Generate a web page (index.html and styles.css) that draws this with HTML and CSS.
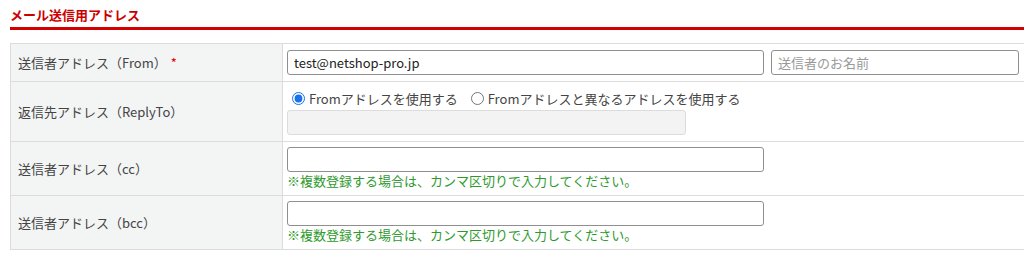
FILE: index.html
```html
<!DOCTYPE html>
<html lang="ja">
<head>
<meta charset="utf-8">
<link rel="stylesheet" href="styles.css">
</head>
<body>
<div class="section">
  <h2 class="section-title">メール送信用アドレス</h2>
  <table class="form-table">
    <tr class="row-from">
      <th>送信者アドレス（From）<span class="req">*</span></th>
      <td>
        <div class="inline">
          <input class="text wide" type="text" value="test@netshop-pro.jp">
          <input class="text name" type="text" placeholder="送信者のお名前">
        </div>
      </td>
    </tr>
    <tr class="row-reply">
      <th>返信先アドレス（ReplyTo）</th>
      <td>
        <div class="radios">
          <label class="radio"><input type="radio" name="reply" checked>Fromアドレスを使用する</label>
          <label class="radio"><input type="radio" name="reply">Fromアドレスと異なるアドレスを使用する</label>
        </div>
        <input class="text disabled" type="text" disabled>
      </td>
    </tr>
    <tr class="row-multi">
      <th>送信者アドレス（cc）</th>
      <td>
        <input class="text wide" type="text">
        <div class="note">※複数登録する場合は、カンマ区切りで入力してください。</div>
      </td>
    </tr>
    <tr class="row-multi">
      <th>送信者アドレス（bcc）</th>
      <td>
        <input class="text wide" type="text">
        <div class="note">※複数登録する場合は、カンマ区切りで入力してください。</div>
      </td>
    </tr>
  </table>
</div>
</body>
</html>
```

FILE: styles.css
```css
html, body {
  margin: 0;
  padding: 0;
  overflow: hidden;
  background: #fff;
}
body {
  font-family: "Noto Sans CJK JP", "Noto Sans", sans-serif;
  font-size: 13px;
  color: #444;
}
.section {
  padding: 0 0 0 10px;
  width: 1024px;
}
.section-title {
  margin: 0;
  padding-top: 5px;
  height: 22px;
  font-size: 13px;
  line-height: 20px;
  font-weight: bold;
  color: #cc0000;
  border-bottom: 3px solid #d40000;
}
.form-table {
  margin-top: 13px;
  border-collapse: collapse;
  width: 1024px;
}
.form-table th,
.form-table td {
  border: 1px solid #dcdcdc;
  vertical-align: middle;
}
.form-table th {
  width: 264px;
  background: #f3f4f4;
  text-align: left;
  font-weight: normal;
  color: #444;
  padding: 0 0 0 7px;
}
.form-table td {
  padding: 5px 4px;
}
.req {
  color: #e60000;
  margin-left: 4px;
}
.inline {
  display: flex;
  gap: 7px;
  align-items: center;
}
.text {
  box-sizing: border-box;
  height: 25px;
  border: 1px solid #8f8f8f;
  border-radius: 3px;
  padding: 0 6px;
  font-family: "Noto Sans CJK JP", "Noto Sans", sans-serif;
  font-size: 13px;
  color: #222;
  background: #fff;
  margin: 0;
  display: block;
}
.text::placeholder {
  color: #9a9a9a;
}
.wide {
  width: 477px;
}
.name {
  width: 248px;
}
.row-from td {
  padding-top: 6px;
  padding-bottom: 6px;
}
.row-reply td {
  padding-top: 4px;
  padding-bottom: 6px;
}
.radios {
  display: flex;
  gap: 8px;
  height: 24px;
  align-items: center;
}
.radio {
  display: flex;
  align-items: center;
  color: #444;
}
.radio input {
  margin: 0 4px 0 5px;
  width: 13px;
  height: 13px;
  accent-color: #1a73e8;
}
.disabled {
  width: 399px;
  background: #f3f3f3;
  border-color: #dcdcdc;
}
.row-multi td {
  padding-top: 5px;
  padding-bottom: 5px;
}
.note {
  color: #2e9a2e;
  font-size: 13px;
  line-height: 18px;
}
```
